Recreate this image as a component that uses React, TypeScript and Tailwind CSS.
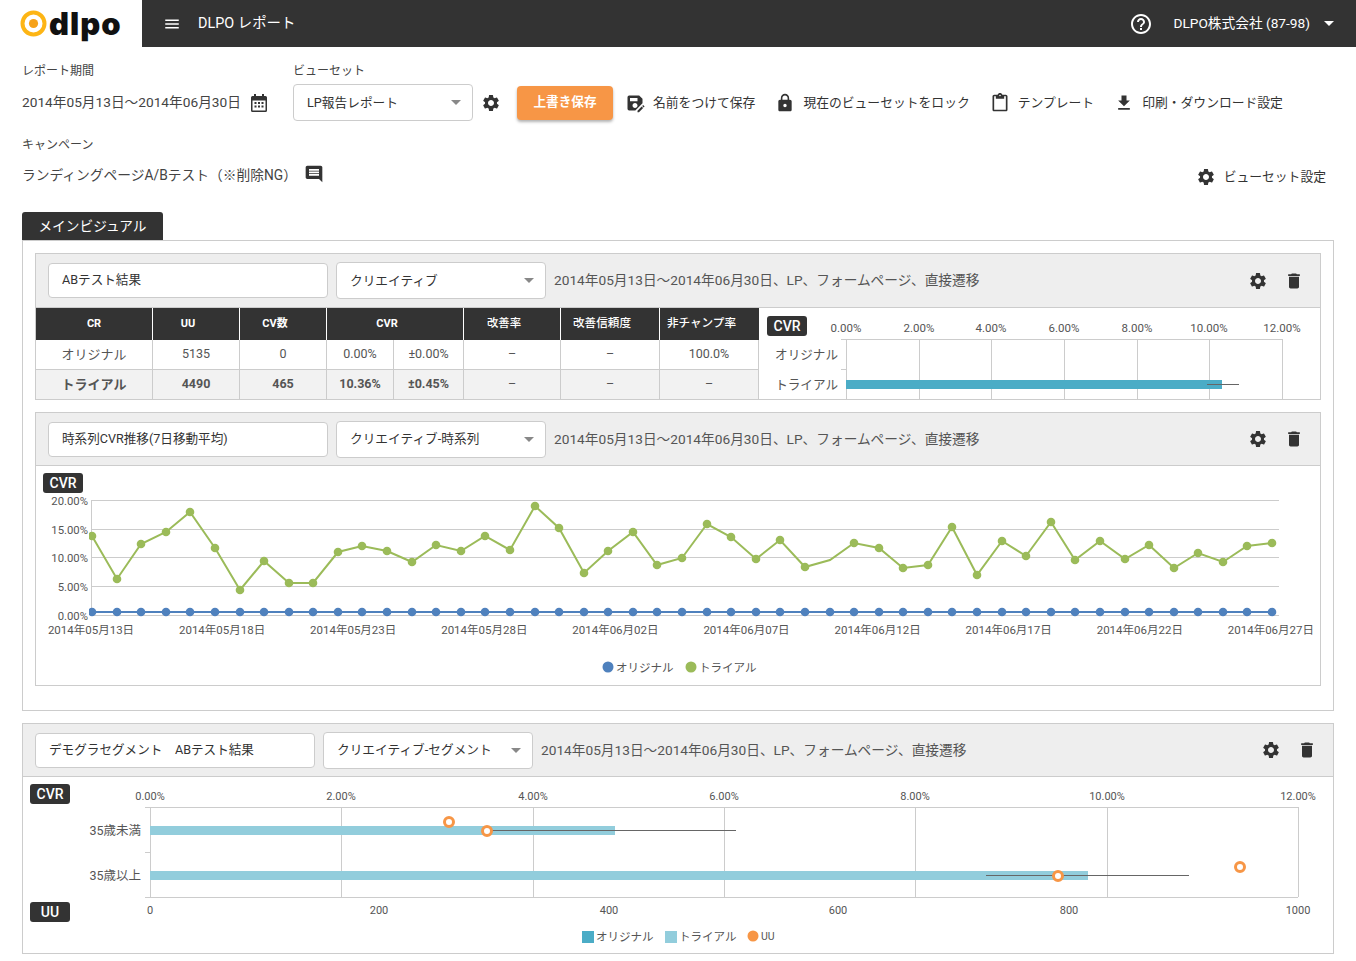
import React from "react";
import {
  MdComment,
  MdContentPaste,
  MdDelete,
  MdFileDownload,
  MdHelpOutline,
  MdLock,
  MdMenu,
  MdSaveAs,
  MdSettings,
} from "react-icons/md";

const FONT = "Roboto, 'Noto Sans CJK JP', sans-serif";
const RANGE = "2014年05月13日〜2014年06月30日、LP、フォームページ、直接遷移";

const TREND = [
  536, 579, 544, 532, 512, 548, 590, 561, 583, 583, 552, 546, 551, 562, 545, 551, 536, 550, 506, 528, 573, 551, 532, 565, 558,
  524, 537, 559, 540, 567, 560, 543, 548, 568, 565, 527, 575, 541, 556, 522, 560, 541, 559, 545, 568, 553, 562, 546, 543,
];
const TREND_X = [
  92, 117, 141, 166, 190, 215, 240, 264, 289, 313, 338, 362, 387, 412, 436, 461, 485, 510, 535, 559, 584, 608, 633, 657, 682, 707,
  731, 756, 780, 805, 830, 854, 879, 903, 928, 952, 977, 1002, 1026, 1051, 1075, 1100, 1125, 1149, 1174, 1198, 1223, 1247, 1272,
];
const TREND_DATES = ["05月13日", "05月18日", "05月23日", "05月28日", "06月02日", "06月07日", "06月12日", "06月17日", "06月22日", "06月27日"];

const Triangle = ({ className }: { className?: string }) => (
  <svg width="10" height="5" viewBox="0 0 10 5" className={className}>
    <path d="M0 0h10L5 5z" fill="currentColor" />
  </svg>
);

const CalendarIcon = () => (
  <svg width="16" height="18" viewBox="0 0 16 18" className="ml-[10px] text-[#333]">
    <path
      fill="currentColor"
      fillRule="evenodd"
      d="M3 0h2v2h6V0h2v2h1.5A1.5 1.5 0 0 1 16 3.5v13a1.5 1.5 0 0 1-1.5 1.5h-13A1.5 1.5 0 0 1 0 16.5v-13A1.5 1.5 0 0 1 1.500 2H3zM1.500 6.500v10h13v-10z"
    />
    <path fill="currentColor" d="M3.500 8h2v2h-2zM7 8h2v2H7zm3.500 0h2v2h-2zM3.500 11.500h2v2h-2zm3.500 0h2v2H7zm3.500 0h2v2h-2z" />
  </svg>
);

const Logo = () => (
  <div className="flex w-[142px] items-center pb-px pl-5">
    <svg width="27" height="27" viewBox="0 0 27 27">
      <circle cx="13.5" cy="13.5" r="11" fill="none" stroke="#fdb515" strokeWidth="4" />
      <circle cx="13.5" cy="13.5" r="4.6" fill="#f6a21a" />
    </svg>
    <span className="ml-[2px] font-['Inter'] text-[31px] leading-none font-black tracking-[1px] text-[#111]">dlpo</span>
  </div>
);

const SelectBox = ({ label, width }: { label: string; width: string }) => (
  <div className={`flex ${width} h-[37px] items-center justify-between rounded border border-[#ccc] bg-white pr-[11px] pl-[13px] text-[12.7px] text-[#333]`}>
    <span>{label}</span>
    <Triangle className="text-[#888]" />
  </div>
);

const ToolItem = ({ icon, label, className }: { icon: React.ReactNode; label: string; className?: string }) => (
  <div className={`flex items-center text-[12.8px] text-[#333] ${className ?? ""}`}>
    {icon}
    <span>{label}</span>
  </div>
);

const CardHeader = ({ name, select, h = "h-[53px]" }: { name: string; select: string; h?: string }) => (
  <div className={`flex ${h} items-center border-b border-[#ccc] bg-[#eee] pr-[16px] pl-[12px]`}>
    <div className="flex h-[35px] w-[280px] items-center rounded border border-[#ccc] bg-white pl-[13px] text-[12.6px] text-[#333]">
      {name}
    </div>
    <SelectBox label={select} width="w-[210px] ml-[8px]" />
    <span className="ml-[8px] text-[13.7px] text-[#555]">{RANGE}</span>
    <div className="ml-auto flex items-center gap-[16px] text-[#333]">
      <MdSettings size={20} />
      <MdDelete size={20} />
    </div>
  </div>
);

const Badge = ({ children, className }: { children: React.ReactNode; className?: string }) => (
  <div className={`flex h-[20px] w-[40px] items-center justify-center rounded-[3px] bg-[#333] text-[14px] font-medium text-white ${className ?? ""}`}>
    {children}
  </div>
);

const headCell = "flex items-center justify-center border-r border-white bg-[#333] text-center text-white";
const cell = "flex items-center justify-center border-r border-[#ccc] text-center text-[12.5px] text-[#555]";

const ResultTable = () => (
  <div className="grid h-[91px] w-[723px] shrink-0 grid-cols-[117px_87px_87px_67px_70px_97px_99px_99px] grid-rows-[32px_30px_29px]">
    <div className={`${headCell} text-[11px] font-bold`}>CR</div>
    <div className={`${headCell} pr-[16px] text-[11px] font-bold`}>UU</div>
    <div className={`${headCell} pr-[16px] text-[11px] font-bold`}>CV数</div>
    <div className={`${headCell} col-span-2 pr-[16px] text-[11px] font-bold`}>CVR</div>
    <div className={`${headCell} pr-[16px] text-[11.4px] font-medium`}>改善率</div>
    <div className={`${headCell} pr-[16px] text-[11.6px] font-medium`}>改善信頼度</div>
    <div className={`${headCell} border-r-0 pr-[16px] text-[11.6px] font-medium whitespace-nowrap`}>非チャンプ率</div>
    {["オリジナル", "5135", "0", "0.00%", "±0.00%", "–", "–", "100.0%"].map((t, i) => (
      <div key={i} className={`${cell} border-b bg-white ${i === 0 ? "text-[13px]" : ""}`}>
        {t}
      </div>
    ))}
    {["トライアル", "4490", "465", "10.36%", "±0.45%", "–", "–", "–"].map((t, i) => (
      <div key={i} className={`${cell} bg-[#f2f2f2] ${i === 0 ? "text-[13px]" : ""} ${i > 4 ? "" : "font-bold text-[#333]"}`}>
        {t}
      </div>
    ))}
  </div>
);

const SmallBarChart = () => {
  const grid = [919, 991, 1064, 1137, 1209, 1282];
  const labels = ["0.00%", "2.00%", "4.00%", "6.00%", "8.00%", "10.00%", "12.00%"];
  const xs = [846, 919, 991, 1064, 1137, 1209, 1282];
  return (
    <div className="relative flex-1">
      <Badge className="absolute top-[8px] left-[8px] w-[39px]">CVR</Badge>
      <svg width="561" height="91" viewBox="759 308 561 91" fontFamily={FONT}>
        {labels.map((l, i) => (
          <text key={l} x={xs[i]} y="332" textAnchor="middle" fontSize="11.5" fill="#555">
            {l}
          </text>
        ))}
        <path d="M841 339.5H1282" stroke="#ccc" />
        <path d="M841 369.5H846" stroke="#ccc" />
        <path d="M846.5 339V400" stroke="#ccc" />
        {grid.map((x) => (
          <path key={x} d={`M${x}.5 339V400`} stroke="#ccc" />
        ))}
        <text x="838" y="359" textAnchor="end" fontSize="12.6" fill="#555">オリジナル</text>
        <text x="838" y="389" textAnchor="end" fontSize="12.6" fill="#555">トライアル</text>
        <rect x="846" y="380" width="376" height="9" fill="#4bacc6" />
        <path d="M1207 384.5H1239" stroke="#666" />
      </svg>
    </div>
  );
};

const TrendChart = () => {
  const points = TREND_X.map((x, i) => `${x},${TREND[i]}`).join(" ");
  const lines = [
    [500, "20.00%"],
    [529, "15.00%"],
    [557, "10.00%"],
    [586, "5.00%"],
    [615, "0.00%"],
  ] as const;
  return (
    <div className="relative h-[219px]">
      <Badge className="absolute top-[7px] left-[7px]">CVR</Badge>
      <svg width="1284" height="219" viewBox="36 466 1284 219" fontFamily={FONT}>
        <defs>
          <clipPath id="trend-clip">
            <rect x="89" y="480" width="1200" height="150" />
          </clipPath>
        </defs>
        {lines.map(([y, l]) => (
          <g key={l}>
            <path d={`M92 ${y}.5H1279`} stroke="#ccc" />
            <text x="88" y={y + 5} textAnchor="end" fontSize="11.3" fill="#555">{l}</text>
          </g>
        ))}
        <path d="M91.5 500V615" stroke="#ccc" />
        <g clipPath="url(#trend-clip)">
          <path d="M92 612H1272" stroke="#4f81bd" strokeWidth="2" />
          {TREND_X.map((x) => (
            <circle key={x} cx={x} cy="612" r="4.3" fill="#4f81bd" />
          ))}
          <polyline points={points} fill="none" stroke="#9bbb59" strokeWidth="2" />
          {TREND_X.map((x, i) => (i === 30 ? null : <circle key={x} cx={x} cy={TREND[i]} r="4.3" fill="#9bbb59" />))}
        </g>
        {TREND_DATES.map((d, i) => (
          <text key={d} x={91 + i * 131.1} y="634" textAnchor="middle" fontSize="11.5" fill="#555">
            2014年{d}
          </text>
        ))}
        <circle cx="608" cy="667" r="5.5" fill="#4f81bd" />
        <text x="616" y="672" fontSize="11.5" fill="#555">オリジナル</text>
        <circle cx="691" cy="667" r="5.5" fill="#9bbb59" />
        <text x="699" y="672" fontSize="11.5" fill="#555">トライアル</text>
      </svg>
    </div>
  );
};

const Marker = ({ x, y }: { x: number; y: number }) => (
  <circle cx={x} cy={y} r="4.5" fill="#fff" stroke="#f79646" strokeWidth="3" />
);

const SegmentChart = () => {
  const grid = [341, 533, 724, 915, 1107, 1298];
  const top = ["0.00%", "2.00%", "4.00%", "6.00%", "8.00%", "10.00%", "12.00%"];
  const topX = [150, 341, 533, 724, 915, 1107, 1298];
  const bottom = [
    [150, "0"],
    [379, "200"],
    [609, "400"],
    [838, "600"],
    [1069, "800"],
    [1298, "1000"],
  ] as const;
  return (
    <div className="relative h-[176px]">
      <Badge className="absolute top-[7px] left-[7px]">CVR</Badge>
      <Badge className="absolute top-[125px] left-[7px]">UU</Badge>
      <svg width="1310" height="176" viewBox="23 777 1310 176" fontFamily={FONT}>
        {top.map((l, i) => (
          <text key={l} x={topX[i]} y="800" textAnchor="middle" fontSize="11" fill="#555">{l}</text>
        ))}
        <path d="M145 807.5H1298M145 897.5H1298M145 852.5H150M150.5 807V897" stroke="#ccc" />
        {grid.map((x) => (
          <path key={x} d={`M${x}.5 807V897`} stroke="#ccc" />
        ))}
        <text x="141" y="835" textAnchor="end" fontSize="12.5" fill="#555">35歳未満</text>
        <text x="141" y="880" textAnchor="end" fontSize="12.5" fill="#555">35歳以上</text>
        <rect x="150" y="826" width="465" height="9" fill="#92cddc" />
        <rect x="150" y="871" width="938" height="9" fill="#92cddc" />
        <path d="M487 830.5H736M986 875.5H1189" stroke="#666" />
        <Marker x={449} y={822} />
        <Marker x={487} y={831} />
        <Marker x={1058} y={876} />
        <Marker x={1240} y={867} />
        {bottom.map(([x, l]) => (
          <text key={l} x={x} y="914" textAnchor="middle" fontSize="11" fill="#555">{l}</text>
        ))}
        <rect x="582" y="931" width="12" height="12" fill="#4bacc6" />
        <text x="596" y="941" fontSize="11.5" fill="#555">オリジナル</text>
        <rect x="665" y="931" width="12" height="12" fill="#92cddc" />
        <text x="679" y="941" fontSize="11.5" fill="#555">トライアル</text>
        <circle cx="753" cy="936" r="5.5" fill="#f79646" />
        <text x="761" y="940" fontSize="10.5" fill="#555">UU</text>
      </svg>
    </div>
  );
};

export default function App() {
  return (
    <div className="min-h-[961px] bg-white text-[#333]" style={{ fontFamily: FONT }}>
      <header className="flex h-[47px]">
        <Logo />
        <div className="flex flex-1 items-center bg-[#333] pr-[22px] pl-[21px] text-white">
          <MdMenu size={18} />
          <span className="ml-[17px] text-[14.4px]">DLPO レポート</span>
          <MdHelpOutline size={24} className="ml-auto" />
          <span className="ml-[20px] text-[13.7px]">DLPO株式会社 (87-98)</span>
          <Triangle className="ml-[14px]" />
        </div>
      </header>

      <div className="px-[22px]">
        <div className="flex pt-[16px]">
          <div className="w-[271px]">
            <div className="text-[12px] leading-[16px] text-[#444]">レポート期間</div>
            <div className="mt-[5px] flex h-[37px] items-center text-[13.7px] text-[#444]">
              2014年05月13日〜2014年06月30日
              <CalendarIcon />
            </div>
          </div>
          <div>
            <div className="text-[12px] leading-[16px] text-[#444]">ビューセット</div>
            <div className="mt-[5px] flex items-center">
              <SelectBox label="LP報告レポート" width="w-[180px]" />
              <MdSettings size={20} className="ml-[8px] text-[#333]" />
              <button className="ml-[16px] h-[34px] w-[96px] rounded bg-[#f79646] text-[12.6px] font-bold text-white shadow-[0_2px_3px_rgba(0,0,0,0.3)]">
                上書き保存
              </button>
              <ToolItem className="ml-[12px]" icon={<MdSaveAs size={20} className="mr-[8px]" />} label="名前をつけて保存" />
              <ToolItem className="ml-[20px]" icon={<MdLock size={20} className="mr-[8px]" />} label="現在のビューセットをロック" />
              <ToolItem className="ml-[20px]" icon={<MdContentPaste size={20} className="mr-[8px]" />} label="テンプレート" />
              <ToolItem className="ml-[20px]" icon={<MdFileDownload size={20} className="mr-[8px]" />} label="印刷・ダウンロード設定" />
            </div>
          </div>
        </div>

        <div className="mt-[16px] text-[12px] leading-[16px] text-[#444]">キャンペーン</div>
        <div className="mt-[2px] flex h-[40px] items-center">
          <span className="text-[13.75px] text-[#444]">ランディングページA/Bテスト（※削除NG）</span>
          <MdComment size={20} className="mt-[-2px] ml-[7px] text-[#333]" />
          <ToolItem className="mt-[4px] mr-[8px] ml-auto" icon={<MdSettings size={20} className="mr-[8px]" />} label="ビューセット設定" />
        </div>

        <div className="mt-[17px] flex h-[28px] w-[141px] items-center justify-center rounded-t-[3px] bg-[#333] text-[13.7px] text-white">
          メインビジュアル
        </div>

        <div className="border border-[#ccc] px-[12px] pt-[12px] pb-[24px]">
          <div className="border border-[#ccc]">
            <CardHeader name="ABテスト結果" select="クリエイティブ" h="h-[54px]" />
            <div className="flex">
              <ResultTable />
              <SmallBarChart />
            </div>
          </div>
          <div className="mt-[12px] border border-[#ccc]">
            <CardHeader name="時系列CVR推移(7日移動平均)" select="クリエイティブ-時系列" />
            <TrendChart />
          </div>
        </div>

        <div className="mt-[12px] border border-[#ccc]">
          <CardHeader name="デモグラセグメント　ABテスト結果" select="クリエイティブ-セグメント" />
          <SegmentChart />
        </div>
      </div>
    </div>
  );
}
